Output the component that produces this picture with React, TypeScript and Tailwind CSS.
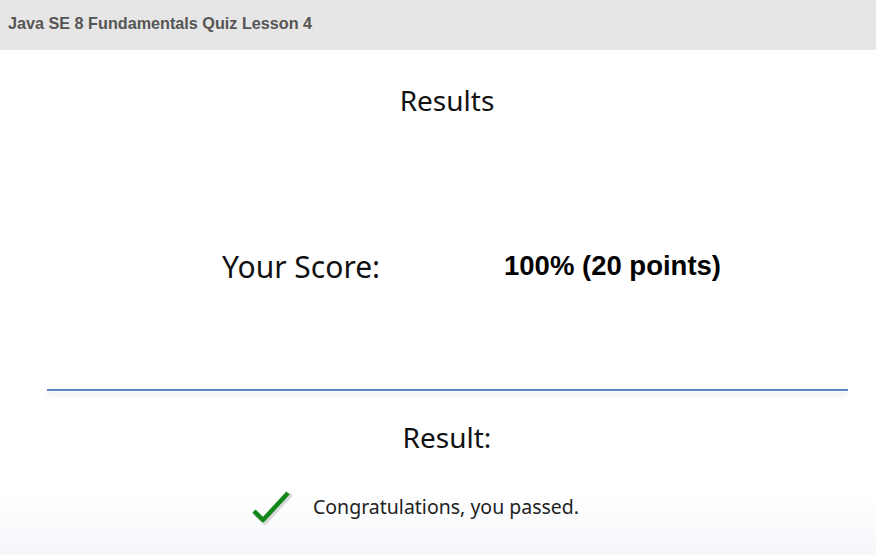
import React from 'react';

const segoe = { fontFamily: '"Noto Sans", "Open Sans", sans-serif' };

const CheckMark: React.FC = () => (
  <svg width="44" height="36" viewBox="0 0 44 36" className="shrink-0">
    <path d="M4 22 L13 31 L38 4" fill="none" stroke="#c8c8c8" strokeWidth="5" strokeLinecap="round" strokeLinejoin="round" transform="translate(1.5 2.5)" opacity="0.7" />
    <path d="M4 22 L13 31 L38 4" fill="none" stroke="#13871a" strokeWidth="4.5" strokeLinejoin="round" />
  </svg>
);

export default function App() {
  return (
    <div className="w-[876px] h-[555px] bg-white overflow-hidden flex flex-col">
      <div className="h-[50px] bg-[#e6e6e6] flex items-start pt-[11px] px-[8px] shrink-0">
        <span className="text-[16.2px] font-bold text-[#555555]" style={{ fontFamily: '"Liberation Sans", Arial, sans-serif' }}>
          Java SE 8 Fundamentals Quiz Lesson 4
        </span>
      </div>

      <div className="flex-1 flex flex-col bg-gradient-to-b from-white from-[88%] to-[#f5f7fb]" style={segoe}>
        <div className="text-center text-[28px] text-[#111] pt-[31px] pl-[18px] leading-[38px]">Results</div>

        <div className="flex items-center pl-[222px] mt-[128px] h-[38px]">
          <span className="w-[282px] text-[30px] text-[#111]">Your Score:</span>
          <span className="text-[27.5px] font-bold text-black" style={{ fontFamily: '"Liberation Sans", Arial, sans-serif' }}>
            100% (20 points)
          </span>
        </div>

        <div className="ml-[47px] mr-[28px] mt-[104px] h-[2px] bg-[#5d86c2] shadow-[0_4px_5px_rgba(0,0,0,0.12)]" />

        <div className="text-center text-[28px] text-[#111] pl-[18px] mt-[27px] leading-[38px]">Result:</div>

        <div className="flex items-center pl-[250px] mt-[33px]">
          <CheckMark />
          <span className="ml-[19px] text-[19.5px] text-[#222]">Congratulations, you passed.</span>
        </div>
      </div>
    </div>
  );
}
